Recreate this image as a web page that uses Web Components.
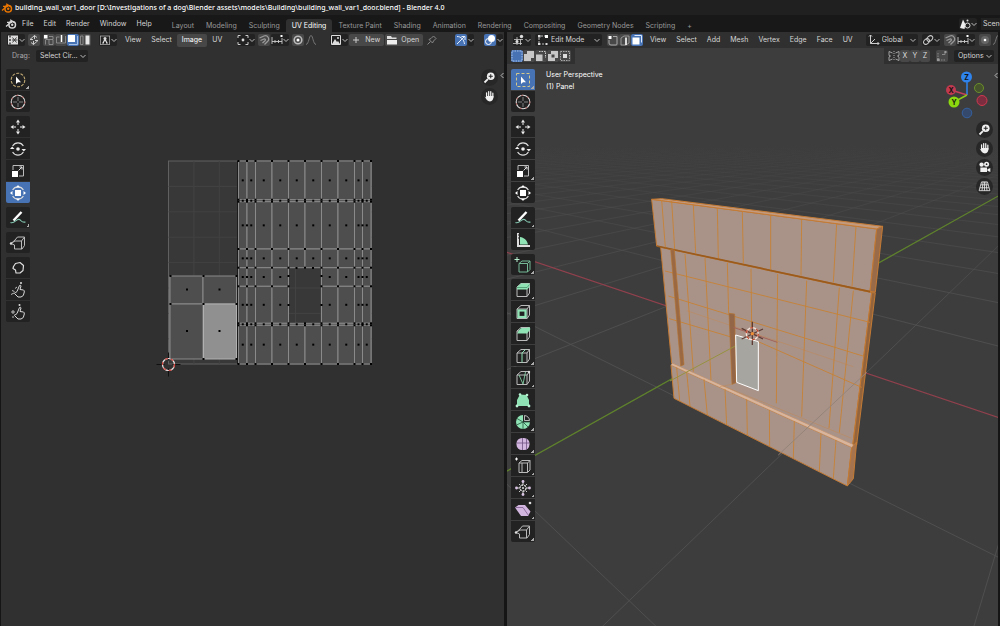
<!DOCTYPE html>
<html lang="en">
<head>
<meta charset="utf-8">
<title>Blender</title>
<style>
    html, body { margin: 0; height: 100%; }
    body {
        background: #181818;
        color: #d6d6d6;
        font: 7px/12px Inter, "Liberation Sans", sans-serif;
        overflow: hidden;
    }
</style>
</head>
<body>
<app-window></app-window>

<script>
// ---------- icons ----------

// header icons, 12x12
const SMALL = {
    logo: '<circle cx="7.2" cy="6.8" r="3.3" fill="none" stroke="currentColor" stroke-width="1.5"/><circle cx="7.2" cy="6.8" r="1.2" fill="currentColor"/><path d="M1 8.6 6.2 4M2 4.4h5M5.2 1.8 9 4.6" stroke="currentColor" stroke-width="1.3" fill="none"/>',
    uvEditor: '<path d="M1 1.500h10v9H1z" fill="#ddd"/><path d="M3 1.500v2M3 5v2M3 8.500v2" stroke="#222" stroke-width="1.300"/><path d="M5.500 3.500l4 5M9.500 3.500l-4 5M5 6h5.500" stroke="#333" stroke-width=".9"/>',
    sync: '<path d="M2 5.500 6.500 1.500v3.500M10 6.500 5.500 10.500V7M2 5.500h3M10 6.500H7M6.500 1.500 9 3.500M5.500 10.500 3 8.500" stroke="#ccc" fill="none"/>',
    selVert: '<rect x="1" y="1" width="3.500" height="3.500" fill="#fff"/><path d="M6 2.500h4v3H2.500M2.500 6v4.500M6 6v4.500h4V6" stroke="#999" fill="none" stroke-width=".8"/>',
    selEdge: '<path d="M1.500 3v6h5M10.500 2v7h-4M1.500 3h3" stroke="#999" fill="none" stroke-width=".8"/><path d="M6.500 1v7" stroke="#fff" stroke-width="1.500"/>',
    selFaceUv: '<rect x="1" y="1" width="7" height="7" fill="#fff"/><path d="M10.500 2v8.500H2" stroke="#bcd0ee" fill="none" stroke-width=".8"/>',
    selIsland: '<path d="M1.500 2v8.500H4V2z" stroke="#999" fill="none" stroke-width=".8"/><path d="M6.500 1.500h4v9h-4z" fill="#e8e8e8"/>',
    sticky: '<path d="M1 2h10M1 10.500h10M1.500 2v8.500M10.500 2v8.500" stroke="#bbb" stroke-width=".7"/><circle cx="6" cy="4.500" r="1.500" fill="#ddd"/><path d="M6 4 9 9.500H7V7.500H5v2H3z" fill="#ddd"/>',
    pivot: '<path d="M1 4V1.500h2.500M8.500 1.500H11V4M11 8v2.500H8.500M3.500 10.500H1V8" stroke="#ccc" fill="none"/><circle cx="6" cy="6" r="1.400" fill="#ddd"/>',
    magnet: '<path d="M1.500 4 6 2a3.300 3.300 0 0 1 3.500 5.500L6.500 10.500M2.500 6.500 6 5a1 1 0 0 1 1 1.700L4.500 9" stroke="#9a9a9a" fill="none" stroke-width="1.300"/>',
    snapTo: '<path d="M1 3v7M11 4v6M1 7.500h10M4 6v3M7.500 6v3" stroke="#ccc" fill="none" stroke-width=".9"/><rect x="9.500" y="1" width="2" height="2" fill="#fff"/>',
    prop: '<circle cx="6" cy="6" r="3.800" fill="none" stroke="#bbb" stroke-width="1.600"/><circle cx="6" cy="6" r="1.500" fill="#fff"/>',
    propOff: '<circle cx="6" cy="6" r="4" fill="#666"/><circle cx="6" cy="6" r="1.300" fill="#fff"/>',
    falloff: '<path d="M1 10.500C4 10 4 1.500 6 1.500s2 8.500 5 9" stroke="#777" fill="none"/>',
    image: '<path d="M1.500 1.500h9v9h-9z" fill="none" stroke="#ddd"/><path d="M2 10 5 5l2 3 1-1 2 3z" fill="#ddd"/><circle cx="8" cy="4" r="1" fill="#ddd"/>',
    plus: '<path d="M6 3v6M3 6h6" stroke="#ccc"/>',
    folder: '<path d="M1 2h4l1 1.500h4.500V5H1z" fill="#ddd"/><path d="M1 6h10v4.500H1z" fill="#eee"/>',
    pin: '<path d="M1.500 10.500 4.500 7.500M3 5.500 6.500 9l1-2L10 4.500 7.500 2 5 4.500z" fill="none" stroke="#888"/>',
    gizmo: '<path d="M2 2.500c4 0 7 3 7.500 7.500M2 10l7-7M6.500 2.500H10V6" fill="none" stroke="#e6eefb"/>',
    overlay: '<circle cx="7.500" cy="4.500" r="3.500" fill="#fff"/><circle cx="4.500" cy="7.500" r="3" fill="none" stroke="#fff"/>',
    viewEditor: '<circle cx="8.500" cy="2.500" r="1.700" fill="#ddd"/><path d="M1 5.500h9M0 9.500h9M4 3v8M7.500 5v6" stroke="#ccc" fill="none" stroke-width=".8"/><circle cx="4" cy="7.500" r="1.500" fill="#ddd"/>',
    editMode: '<path d="M2 4v6h6M4 2h4" stroke="#bbb" fill="none" stroke-dasharray="2 1"/><rect x="1" y="1" width="2.500" height="2.500" fill="#ddd"/><rect x="8" y="1" width="3" height="3" fill="#fff"/><rect x="1" y="9" width="2" height="2" fill="#ddd"/><rect x="8.500" y="9" width="2" height="2" fill="#ddd"/>',
    meshVert: '<path d="M2 6v3a2 2 0 0 0 2 2h5a1 1 0 0 0 1-1V2.500H6" stroke="#aaa" fill="none"/><rect x="1.500" y="2" width="3" height="3" fill="#fff"/>',
    meshEdge: '<path d="M2 4l3-2h5v7L7 11H2zM7 11V4" stroke="#aaa" fill="none" stroke-width=".8"/><path d="M7 3.500V11" stroke="#fff" stroke-width="1.500"/>',
    meshFace: '<path d="M3.500 1.500h7v7" stroke="#dce8fa" fill="none"/><rect x="1.500" y="3.500" width="7" height="7" fill="#fff"/>',
    axes: '<path d="M2.500 1v8.500H11M2.500 9.500 7 5M1 2.500 2.500 1 4 2.500M9.500 8 11 9.500 9.500 11" stroke="#ccc" fill="none"/>',
    link: '<ellipse cx="4.500" cy="7.500" rx="3.200" ry="2.300" transform="rotate(-40 4.500 7.500)" fill="none" stroke="#ccc"/><ellipse cx="7.800" cy="4.500" rx="3.200" ry="2.300" transform="rotate(-40 7.800 4.500)" fill="none" stroke="#ccc"/>',
    scene: '<path d="M1 10 4 1.500l2.500 5L5.500 11z" fill="#eee"/><circle cx="8.500" cy="7.500" r="2.500" fill="none" stroke="#ddd"/><circle cx="8.500" cy="2.500" r="1" fill="#ddd"/>',
    boxNew: '<rect x="1" y="1" width="10" height="10" fill="#4772b3" stroke="#a8c2ea" stroke-dasharray="1.500 1"/>',
    boxAdd: '<path d="M4 1h7v7H8v3H1V4h3z" fill="#c8c8c8"/>',
    boxSub: '<path d="M1 4.500h6.500V11H1z" fill="#c8c8c8"/><path d="M4 1.500h6.500V8" stroke="#ccc" fill="none" stroke-dasharray="1.500 1"/>',
    boxXor: '<path d="M4 1h7v7H8v3H1V4h3zM4.500 4.500v3h3v-3z" fill="#c8c8c8" fill-rule="evenodd"/>',
    boxAnd: '<rect x="1.500" y="1.500" width="9" height="9" fill="none" stroke="#aaa" stroke-dasharray="1.500 1"/><rect x="4" y="4" width="4" height="4" fill="#ddd"/>',
    mirror: '<path d="M6 1v10" stroke="#aaa" stroke-dasharray="1 1"/><path d="M4.500 3 1 1.500v4L2.500 6 1 7v3.500L4.500 9M7.500 3 11 1.500v4L9.500 6 11 7v3.500L7.500 9" fill="none" stroke="#bbb" stroke-width=".8"/>',
    automerge: '<path d="M2 3v7h7" stroke="#888" stroke-dasharray="1.500 1" fill="none"/><path d="M9 1.500v3H6" stroke="#888" fill="none"/><rect x="1" y="8.500" width="2.500" height="2.500" fill="#999"/><rect x="8.500" y="1" width="2" height="2" fill="#999"/>',
};

// wire cube shared by the mesh tools
const CUBE = '<path d="M3 6 7 2.500h8.500L13 6zM3 6v9.500h10V6M13 15.500 15.500 12V2.500" fill="none" stroke="#bbb"/>';
const ORBIT = '<path d="M3.600 6a6.200 6.200 0 0 1 10.800 0M14.400 12a6.200 6.200 0 0 1-10.800 0" fill="none" stroke="#ddd" stroke-width="1.100"/>';
// closed hand with the forefinger up
const HAND = '<path d="M8 10.500 10.500 4.500q1.200-.8 1.500.5L11 8.500l3.500.5q1 .5.800 2l-1 3.500L12 16H9L5.500 12.500q0-1.200 1.300-1z" fill="none" stroke="#d8d8d8" stroke-linejoin="round"/>';
const GREEN = '#8fe3b4';

// tool icons, 18x18
const LARGE = {
    tweak: '<circle cx="9" cy="9" r="6.800" fill="none" stroke="#c0a973" stroke-width="1.100" stroke-dasharray="3 1.300"/><path d="M7 5.500v7.500l2-1.800h3z" fill="#fff"/>',
    selectBox: '<rect x="2.500" y="2.500" width="13" height="13" fill="none" stroke="#d4c98a" stroke-dasharray="3 2"/><path d="M7 5.500v7.500l2-1.800h3z" fill="#fff"/>',
    cursor: '<circle cx="9" cy="9" r="6.800" fill="none" stroke="#dedede" stroke-width="1.100"/><circle cx="9" cy="9" r="6.800" fill="none" stroke="#a8615e" stroke-width="1.100" stroke-dasharray="2 4"/><path d="M9 4v4M9 10v4M4 9h4M10 9h4" stroke="#999" stroke-width=".8"/>',
    move: '<path d="M9 1.500 11 4.500H7zM9 16.500 7 13.500h4zM1.500 9l3-2v4zM16.500 9l-3 2V7z" fill="#eee"/><path d="M9 4.500V7M9 11v2.500M4.500 9H7M11 9h2.500" stroke="#eee"/>',
    rotate: ORBIT + '<circle cx="9" cy="9" r="1.800" fill="#eee"/><path d="M1 9h4.500L3.200 6.500zM12.500 9H17l-2.200 2.500z" fill="#eee"/>',
    scale: '<path d="M4 8V3.500h10.500V14H10" fill="none" stroke="#bbb"/><rect x="3" y="9" width="6" height="6" fill="#fff"/><path d="M9.500 8.500 13 5M10.500 5H13v2.500" fill="none" stroke="#ddd"/>',
    transform: ORBIT + '<rect x="6" y="6" width="6" height="6" fill="#fff"/><path d="M9 1 11 3.500H7zM9 17l-2-2.500h4zM1 9l2.500-2v4zM17 9l-2.500 2V7z" fill="#fff"/>',
    annotate: '<path d="M4.500 11.500 12.500 3" stroke="#fff" stroke-width="2.400"/><path d="M1.500 13.500c4 2 6-4.500 9-3 2 1 2 3.500 6 2.500" fill="none" stroke="#84c7b0" stroke-width="1.100"/>',
    rip: '<path d="M2 9.500 6 6 8.500 3h7v8.500L13 15H5.500V11L2 9.500 6 7h6.500l3-4M12.500 7v8" fill="none" stroke="#bbb"/><circle cx="2" cy="9.500" r="1.200" fill="#ddd"/>',
    grab: '<path d="M4.500 7.500 6.500 4.500l4.500-1 3.500 3-.5 5-3 2.500H7L6.500 11 4 9.500z" fill="none" stroke="#ddd" stroke-width="1.200" stroke-linejoin="round"/>',
    relax: HAND + '<path d="M2 13.500 5 12M3 9.500l2.500 1M8 6 6 7.500" stroke="#bbb"/><circle cx="12" cy="2" r="1" fill="#ddd"/>',
    pinch: HAND + '<path d="M2 9h4M4 7v4M3 14h2" stroke="#bbb"/><circle cx="10.500" cy="2" r="1" fill="#ddd"/>',
    measure: '<path d="M4 2v13h12" fill="none" stroke="#ddd" stroke-width="2"/><path d="M6 6c4 .5 7 3 8 7.500H6z" fill="' + GREEN + '"/><path d="M4 4h1.500M4 7h1.500" stroke="#222"/>',
    addCube: '<path d="M5 7.500 8 5h8l-2.500 2.500zM5 7.500V16h8.500V7.500M13.500 16 16 13.500V5" fill="none" stroke="#74b896"/><path d="M3 1v5M.5 3.500h5" stroke="#b8f0d2"/>',
    extrude: CUBE + '<path d="M3 6 7 2.500h8.500V6L13 8.500H3z" fill="' + GREEN + '"/><path d="M3 6.500h10l2.500-3" stroke="#347858" stroke-width=".6" fill="none"/>',
    inset: CUBE + '<rect x="4.500" y="7.500" width="7" height="6.500" fill="none" stroke="' + GREEN + '" stroke-width="2.200"/>',
    bevel: CUBE + '<path d="M3 8.500 5 5l2.500-2H14l1.500 2.500L13 8.500z" fill="' + GREEN + '"/><circle cx="14.500" cy="4" r="1.800" fill="' + GREEN + '"/>',
    loopCut: CUBE + '<path d="M8 15.500V6l3.500-3.500" fill="none" stroke="' + GREEN + '"/>',
    knife: CUBE + '<path d="M5 6l4 9 2.500-12" fill="none" stroke="' + GREEN + '" stroke-width=".8"/><circle cx="15" cy="3" r="1.200" fill="#ddd"/>',
    polyBuild: '<path d="M6 3.500 12.500 4 15 9v6H3V9z" fill="' + GREEN + '"/><g fill="#b8f0d2"><circle cx="6" cy="3.500" r="1.300"/><circle cx="13" cy="4" r="1.300"/><circle cx="3" cy="15" r="1.400"/><circle cx="15" cy="15" r="1.400"/></g>',
    spin: '<path d="M9 9V2a7 7 0 1 0 7 7z" fill="' + GREEN + '"/><path d="M9 9 3 5.500M9 9l-6.500 3M9 9v7M9 9l5 5M9 9h7" stroke="#25513c" stroke-width=".8"/><path d="M10.500 7.500V2.500c3 .3 5 2.500 5 5z" fill="none" stroke="#ddd" stroke-width=".8"/>',
    smooth: '<rect x="2.500" y="3" width="13" height="12" rx="5.500" fill="#d3b6e0"/><path d="M3 8h12M8.500 3v12M12.500 4v11" stroke="#6f5280" stroke-width=".8"/>',
    edgeSlide: '<path d="M5 6 8 3.500h8L13.500 6zM5 6v9.500h8.500V6M13.500 15.500 16 13V3.500M8 6v9.500" fill="none" stroke="#bbb"/><path d="M1 2h3M2.500.5v3" stroke="#fff"/>',
    shrink: '<path d="M9 3v3M9 12v3M3 9h3M12 9h3M5 5l1.500 1.500M13 5l-1.500 1.500M5 13l1.500-1.500M13 13l-1.500-1.500" stroke="#ccc"/><circle cx="9" cy="9" r="3" fill="none" stroke="#ddd" stroke-width="1.300" stroke-dasharray="2 1"/><circle cx="9" cy="9" r="1" fill="#ddd"/><g fill="#d9c4e4"><circle cx="9" cy="2.500" r="1.400"/><circle cx="9" cy="15.500" r="1.400"/><circle cx="2.500" cy="9" r="1.400"/><circle cx="15.500" cy="9" r="1.400"/></g>',
    shear: '<path d="M1 6.500 4.500 4H11l5.500 6.500-2.500 4.500H7z" fill="#d3b6e0"/><path d="M1.500 6.500H9l5.500 8" stroke="#7a5a8c" fill="none" stroke-width=".8"/><circle cx="16" cy="2" r="1.300" fill="#ddd"/>',
    zoom: '<circle cx="10.500" cy="7.500" r="4.600" fill="#f0f0f0"/><path d="M10.500 5v5M8 7.500h5" stroke="#222" stroke-width="1.200"/><path d="M7 11 3 15" stroke="#f0f0f0" stroke-width="2.200"/>',
    hand: '<path d="M5.500 10.500V4.500M8 9V3M10.500 9V3.200M13 10V5" stroke="#f0f0f0" stroke-width="1.500" stroke-linecap="round"/><path d="M3 9 6 11V8.500h7.800c0 4-1.300 6.500-4.300 6.500C6.500 15 5 12 3 9z" fill="#f0f0f0"/>',
    camera: '<circle cx="5.500" cy="5.500" r="2.600" fill="#f0f0f0"/><circle cx="11.500" cy="5" r="3" fill="#f0f0f0"/><path d="M4 9h8v5.500H4zM12.500 11 16 9.500v5L12.500 13z" fill="#f0f0f0"/><circle cx="11.500" cy="5" r="1" fill="#222"/>',
    grid: '<path d="M5.500 3.500h7l3 10.500h-13zM4.500 7h9M3.500 10.500h11M9 3.500V14M7.300 3.500 6 14M10.700 3.500 12 14" fill="none" stroke="#e8e8e8"/>',
};

function icon(name, size = 12) {
    const set = size === 12 ? SMALL : LARGE;
    return `<svg width="${size}" height="${size}" viewBox="0 0 ${size} ${size}" aria-hidden="true">${set[name] || ''}</svg>`;
}

const CHEVRON = '<svg class="chev" width="6" height="12" viewBox="0 0 6 12" aria-hidden="true"><path d="M.5 5 3 7.500 5.500 5" fill="none" stroke="#bbb"/></svg>';

// ---------- controls ----------

class UiButton extends HTMLElement {
    constructor() {
        super();
        this.attachShadow({ mode: 'open' });
    }

    connectedCallback() {
        const name = this.getAttribute('icon');
        this.shadowRoot.innerHTML = `
            <style>
                :host { display: block; flex: none; }
                button {
                    display: flex; align-items: center; gap: 2px;
                    height: 12px; padding: 0; margin: 0; border: 0;
                    border-radius: 2px; background: none;
                    color: inherit; font: inherit; white-space: nowrap;
                }
                svg { display: block; flex: none; }
                :host([kind="raised"]) button { background: #484848; }
                :host([kind="drop"]) button { background: #222; gap: 0; }
                :host([kind="active"]) button { background: #4772b3; }
                :host([kind="flat"]) button { gap: 0; }
                :host([wide]) button { padding: 0 4px 0 1px; gap: 3px; }
                :host([letter]) button { width: 10px; justify-content: center; color: #ddd; }
            </style>
            <button type="button" aria-label="${this.getAttribute('label') || name}">
                ${name ? icon(name) : ''}<slot></slot>${this.hasAttribute('chevron') ? CHEVRON : ''}
            </button>
        `;
        // a caption that is drawn is its own label
        if (this.textContent.trim()) this.shadowRoot.querySelector('button').removeAttribute('aria-label');
    }
}

class UiSelect extends HTMLElement {
    constructor() {
        super();
        this.attachShadow({ mode: 'open' });
    }

    connectedCallback() {
        const name = this.getAttribute('icon');
        this.shadowRoot.innerHTML = `
            <style>
                :host { display: block; flex: none; }
                label {
                    display: flex; align-items: center;
                    height: 12px; padding: 0 2px;
                    border-radius: 2px; background: #222;
                }
                svg { flex: none; }
                select {
                    appearance: none; border: 0; margin: 0; padding: 0 2px;
                    background: none; color: inherit; font: inherit; flex: 1;
                    width: var(--field, auto);
                }
            </style>
            <label>${name ? icon(name) : ''}
                <select aria-label="${this.getAttribute('label')}"><option>${this.getAttribute('value')}</option></select>
                ${CHEVRON}
            </label>
        `;
    }
}

class MenuList extends HTMLElement {
    constructor() {
        super();
        this.attachShadow({ mode: 'open' });
    }

    connectedCallback() {
        const current = this.getAttribute('current');
        const items = this.getAttribute('items').split(',');
        this.shadowRoot.innerHTML = `
            <style>
                :host { display: block; flex: none; }
                nav { display: flex; }
                button {
                    height: 13px; padding: 0 5px; margin: 0; border: 0;
                    border-radius: 2px; background: none;
                    color: inherit; font: inherit; white-space: nowrap;
                }
                .on { background: #474747; color: #fff; }
                :host([tabs]) button { padding: 0 6px; color: #999; border-radius: 3px 3px 0 0; }
                :host([tabs]) .on { background: #303030; color: #fff; }
            </style>
            <nav>${items.map(t => `<button type="button" class="${t === current ? 'on' : ''}">${t}</button>`).join('')}</nav>
        `;
    }
}

class ToolShelf extends HTMLElement {
    constructor() {
        super();
        this.attachShadow({ mode: 'open' });
    }

    connectedCallback() {
        // groups are split by "|", "+" marks a tool that has more under it
        const active = this.getAttribute('active');
        const groups = this.getAttribute('tools').split('|').map(g => g.trim().split(' '));
        const tool = (raw) => {
            const name = raw.replace('+', '');
            return `<button type="button" aria-label="${name}" class="${name === active ? 'on' : ''} ${raw.endsWith('+') ? 'more' : ''}">${icon(name, 18)}</button>`;
        };
        this.shadowRoot.innerHTML = `
            <style>
                :host { display: flex; flex-direction: column; gap: 4px; width: 24px; }
                div { display: grid; gap: 1px; border-radius: 2px; overflow: hidden; }
                button {
                    height: 21px; padding: 0; margin: 0; border: 0;
                    display: grid; place-items: center;
                    background: #222;
                }
                .on { background: #4772b3; }
                .more {
                    background-image: linear-gradient(135deg, transparent 50%, #aaa 50%);
                    background-size: 3px 3px;
                    background-position: right 1px bottom 1px;
                    background-repeat: no-repeat;
                }
            </style>
            ${groups.map(g => `<div>${g.map(tool).join('')}</div>`).join('')}
        `;
    }
}

class NavButtons extends HTMLElement {
    constructor() {
        super();
        this.attachShadow({ mode: 'open' });
    }

    connectedCallback() {
        this.shadowRoot.innerHTML = `
            <style>
                :host { display: grid; gap: 2px; }
                button {
                    width: 17px; height: 17px; padding: 0; border: 0; border-radius: 50%;
                    display: grid; place-items: center; background: #272727;
                }
                svg { width: 15px; height: 15px; }
            </style>
            ${this.getAttribute('items').split(' ').map(n => `<button type="button" aria-label="${n}">${icon(n, 18)}</button>`).join('')}
        `;
    }
}

class AxisGizmo extends HTMLElement {
    constructor() {
        super();
        this.attachShadow({ mode: 'open' });
    }

    connectedCallback() {
        this.shadowRoot.innerHTML = `
            <style>
                :host { display: block; }
                svg { display: block; }
                text { font: 700 7px Inter, "Liberation Sans", sans-serif; text-anchor: middle; fill: #111; }
            </style>
            <svg width="44" height="50" viewBox="945 69 44 50">
                <g stroke-width="1.500">
                    <path d="M967 95V77" stroke="#2f83ec"/>
                    <path d="M967 95 951 90" stroke="#c5405a"/>
                    <path d="M967 95 954 102" stroke="#8cc81c"/>
                </g>
                <circle cx="979" cy="88" r="4.500" fill="#46532c" stroke="#6b8f2a"/>
                <circle cx="982" cy="100.500" r="5" fill="#7c2e40" stroke="#d0384f"/>
                <circle cx="967" cy="113" r="4.800" fill="#34496b" stroke="#34609f"/>
                <circle cx="966.500" cy="77" r="5.500" fill="#2f83ec"/>
                <circle cx="951" cy="90" r="5" fill="#c0394f"/>
                <circle cx="954" cy="102" r="5.500" fill="#8cd80f"/>
                <text x="966.500" y="79.500">Z</text>
                <text x="951" y="92.500">X</text>
                <text x="954" y="104.500">Y</text>
            </svg>
        `;
    }
}

// ---------- canvases ----------

function cursorMark(x, y, r) {
    return `<g fill="none">
        <path d="M${x - 12} ${y}h8M${x + 4} ${y}h8M${x} ${y - 12}v8M${x} ${y + 4}v8" stroke="#111"/>
        <circle cx="${x}" cy="${y}" r="${r}" stroke="#eee" stroke-width="1.200"/>
        <circle cx="${x}" cy="${y}" r="${r}" stroke="#d0413c" stroke-width="1.200" stroke-dasharray="3 3"/>
    </g>`;
}

class UvCanvas extends HTMLElement {
    constructor() {
        super();
        this.attachShadow({ mode: 'open' });
    }

    connectedCallback() {
        this.shadowRoot.innerHTML = `
            <style>
                :host { display: block; overflow: hidden; }
                svg { display: block; width: 100%; height: 100%; }
            </style>
            <svg viewBox="1 32 503 594" preserveAspectRatio="xMinYMin slice">${this.draw()}</svg>
        `;
    }

    draw() {
        const xs = [238.5, 247, 255.5, 272, 288.5, 305, 321.5, 338, 354.5, 362.5, 371];
        const ys = [161, 199.7, 201.7, 249, 267.7, 286.3, 323.3, 325.3, 364];
        const isHole = (c, r) => c >= 4 && c <= 5 && r >= 4 && r <= 5;
        let faces = '', edges = '', dots = '';
        const dot = (x, y) => { dots += `<rect x="${x - 1}" y="${y - 1}" width="2" height="2"/>`; };

        for (let c = 0; c < xs.length - 1; c++) {
            for (let r = 0; r < ys.length - 1; r++) {
                if (isHole(c, r)) continue;
                const w = xs[c + 1] - xs[c], h = ys[r + 1] - ys[r];
                faces += `<rect x="${xs[c]}" y="${ys[r]}" width="${w}" height="${h}"/>`;
                dot(xs[c] + w / 2, ys[r] + h / 2);
                // narrow strips also show the middle of the shared edge
                if ((c === 0 || c === 8) && r > 0 && r < 7) dot(xs[c + 1], ys[r] + h / 2);
            }
        }
        for (const x of xs) {
            for (const y of ys) if (!(x === 305 && y > 270 && y < 300)) dot(x, y);
        }
        for (const y of [276, 305]) { dot(288.5, y); dot(321.5, y); }
        for (const x of [296.5, 313]) dot(x, 268);

        const own = [[170, 276, 33, 28], [203, 276, 33.5, 28], [170, 304, 33, 55]];
        for (const [x, y, w, h] of own) faces += `<rect x="${x}" y="${y}" width="${w}" height="${h}"/>`;
        for (const y of [276, 304, 359]) for (const x of [170.5, 203.5, 236.5]) dot(x, y);
        for (const y of [289.5, 331]) for (const x of [187, 219.5]) dot(x, y);

        for (let k = 1; k < 8; k++) {
            const d = k * 25.4;
            edges += `<path d="M${168.5 + d} 161v203M168.500 ${161 + d}h203"/>`;
        }
        return `
            <rect x="168.500" y="161" width="203" height="203" fill="#383838" stroke="#606060"/>
            <g stroke="#424242">${edges}</g>
            <g fill="#4e4e4e" stroke="#8a8a8a">${faces}</g>
            <rect x="203.500" y="304" width="33" height="55" fill="#909090" stroke="#b0b0b0"/>
            <path d="M169.500 276v83" stroke="#777"/>
            <path d="M237.500 161v203" stroke="#1c1c1c"/>
            <g fill="#000">${dots}</g>
            ${cursorMark(168.5, 364.5, 6)}
        `;
    }
}

class ViewScene extends HTMLElement {
    constructor() {
        super();
        this.attachShadow({ mode: 'open' });
    }

    connectedCallback() {
        this.shadowRoot.innerHTML = `
            <style>
                :host { display: block; overflow: hidden; }
                svg { display: block; width: 100%; height: 100%; }
            </style>
            <svg viewBox="507 32 491 594" preserveAspectRatio="xMidYMin slice">
                <defs>
                    <linearGradient id="fade" gradientUnits="userSpaceOnUse" x1="0" y1="125" x2="0" y2="330">
                        <stop offset="0.100" stop-color="#505050" stop-opacity="0"/>
                        <stop offset="0.400" stop-color="#505050" stop-opacity=".4"/>
                        <stop offset="1" stop-color="#505050" stop-opacity=".9"/>
                    </linearGradient>
                </defs>
                <rect x="507" y="32" width="491" height="594" fill="#3d3d3d"/>
                <path d="${this.floor()}" fill="none" stroke="url(#fade)"/>
                <path d="M500 250 1000 418" stroke="#91404d" stroke-width="1.200"/>
                <path d="M500 475 1000 195" stroke="#5f822c" stroke-width="1.300"/>
                ${this.wall()}
            </svg>
        `;
    }

    // floor grid: world steps projected toward two vanishing points
    floor() {
        const o = [751.2, 334.3], v1 = [130, 125], v2 = [1124, 125];
        const a = 0.156, b = 0.202;
        const point = (i, j) => {
            const w = 1 + i * a + j * b;
            const at = k => ((o[k] + i * a * v1[k] + j * b * v2[k]) / w).toFixed(1);
            return at(0) + ' ' + at(1);
        };
        let d = '';
        for (let n = -40; n <= 40; n++) {
            if (n === 0) continue;
            const i0 = Math.max(-40, (0.08 - 1 - n * b) / a);
            const j0 = Math.max(-40, (0.08 - 1 - n * a) / b);
            if (i0 < 40) d += `M${point(i0, n)}L${point(40, n)}`;
            if (j0 < 40) d += `M${point(n, j0)}L${point(n, 40)}`;
        }
        return d;
    }

    // the wall is modelled on a 750x900 sheet, a third of it on screen
    wall() {
        const seg = list => list.map(([x1, y1, x2, y2]) => `M${x1} ${y1}L${x2} ${y2}`).join('');
        const top = seg([
            [65, 30, 76, 172], [95, 33, 104, 178], [160, 44, 167, 190], [232, 54, 235, 205], [307, 65, 310, 221],
            [392, 76, 392, 238], [485, 88, 483, 257], [590, 101, 580, 278], [648, 108, 636, 290],
        ]);
        const middle = seg([
            [135, 192, 160, 545], [195, 204, 213, 570], [262, 218, 266, 370], [333, 236, 335, 410], [413, 252, 409, 640],
            [500, 272, 485, 680], [598, 293, 567, 715], [640, 302, 598, 728],
            [75, 243, 690, 397], [85, 318, 672, 499], [88, 386, 270, 440], [355, 455, 665, 592],
        ]);
        const faint = seg([[140, 362, 640, 530], [250, 588, 635, 745], [276, 583, 240, 590]]);
        const bottom = seg([
            [110, 532, 119, 632], [140, 546, 150, 648], [192, 568, 202, 675], [255, 597, 260, 705], [320, 628, 322, 735],
            [388, 660, 389, 768], [463, 694, 460, 804], [543, 731, 538, 844], [588, 750, 580, 865],
        ]);
        return `
            <g transform="translate(640 190) scale(.333333)" stroke-linejoin="round">
                <g fill="#a99389" stroke="#c47a34" stroke-width="3">
                    <path d="M62 172 695 308 638 765 95 520z"/>
                    <path d="M695 308 706 308 650 765 638 768z" fill="#94653d"/>
                    <path d="M35 28 710 117 690 304 50 168z"/>
                    <path d="M35 28 65 26 728 109 710 117z" fill="#c49a7d"/>
                    <path d="M710 117 728 109 706 306 690 304z" fill="#9a6b48"/>
                    <path d="M93 525 635 772 622 888 102 625z"/>
                    <path d="M635 772 650 756 640 866 622 888z" fill="#a5744e"/>
                    <path d="M93 525 97 520 640 764 635 772z" fill="#d8b59c" stroke="#cc9f7e" stroke-width="1"/>
                </g>
                <path d="M50 168 690 305" stroke="#9a5b1c" stroke-width="5"/>
                <path d="${top}${middle}${bottom}" fill="none" stroke="#c9812f" stroke-opacity=".85" stroke-width="3"/>
                <path d="${faint}" fill="none" stroke="#c9813c" stroke-opacity=".55" stroke-width="2"/>
                <path d="M92 178 103 180 132 524 122 528z" fill="#9a6843" stroke="#b5722f" stroke-width="2"/>
                <path d="M267 370 284 372 288 578 276 583z" fill="#946648" stroke="#b5722f" stroke-width="2"/>
                <path d="M90 573 310 455" stroke="#97923f" stroke-width="3"/>
                <path d="M280 412 412 457" stroke="#a2625a" stroke-width="3"/>
                <path d="M415 795 680 547" stroke="#958479" stroke-width="3"/>
                <path d="M287 435 355 455 355 602 290 577z" fill="#a6a59f" stroke="#fff" stroke-width="3"/>
                <g fill="none">
                    <path d="M337 395v70M305 415l64 32M305 447l64-30" stroke="#5d3b33" stroke-width="4"/>
                    <circle cx="337" cy="431" r="18" stroke="#f3e4dc" stroke-width="4"/>
                    <circle cx="337" cy="431" r="18" stroke="#c04a30" stroke-width="4" stroke-dasharray="9 10"/>
                    <circle cx="337" cy="431" r="5" fill="#f0913a"/>
                </g>
            </g>
        `;
    }
}

// ---------- editors ----------

const EDITOR_CSS = `
    :host { display: grid; grid-template: auto 1fr / 1fr; min-width: 0; overflow: hidden; }
    .canvas, .ui { grid-area: 1 / 1 / 3 / 2; min-width: 0; min-height: 0; }
    .ui { display: flex; flex-direction: column; }
    .bar { display: flex; align-items: center; height: 16px; background: #303030; overflow: hidden; }
    .run { display: flex; gap: 1px; }
    .tight { gap: 0; }
    .space { flex: 1; }
    .body { display: flex; justify-content: space-between; align-items: flex-start; flex: 1; }
    .fold { border: 0; padding: 0; background: none; color: #bbb; line-height: 0; }
`;

const FOLD = '<button type="button" class="fold" aria-label="sidebar"><svg width="4" height="7" viewBox="0 0 4 7"><path d="M3.500 1 1 3.500 3.500 6" fill="none" stroke="currentColor"/></svg></button>';

class UvEditor extends HTMLElement {
    constructor() {
        super();
        this.attachShadow({ mode: 'open' });
    }

    connectedCallback() {
        this.shadowRoot.innerHTML = `
            <style>
                ${EDITOR_CSS}
                :host { background: #303030; }
                .bar { padding: 0 1px 0 6px; }
                .head { gap: 3px; }
                .head .tight { margin-right: 5px; }
                .wider { flex: 2; }
                .widest { flex: 3; }
                .tool { padding-left: 11px; gap: 6px; color: #aaa; }
                .tool ui-select { color: #d6d6d6; }
                .body { padding: 5px 0 0 5px; }
                .side { display: flex; align-items: flex-start; gap: 2px; }
                .side .fold { margin-top: 3px; }
            </style>
            <uv-canvas class="canvas"></uv-canvas>
            <div class="ui">
                <div class="bar head">
                    <ui-button kind="drop" icon="uvEditor" chevron></ui-button>
                    <ui-button kind="raised" icon="sync"></ui-button>
                    <div class="run tight">
                        <ui-button kind="raised" icon="selVert"></ui-button>
                        <ui-button kind="raised" icon="selEdge"></ui-button>
                        <ui-button kind="active" icon="selFaceUv"></ui-button>
                        <ui-button kind="raised" icon="selIsland"></ui-button>
                    </div>
                    <ui-button kind="drop" icon="sticky" chevron></ui-button>
                    <menu-list items="View,Select,Image,UV" current="Image"></menu-list>
                    <span class="space"></span>
                    <ui-button kind="drop" icon="pivot" chevron></ui-button>
                    <div class="run">
                        <ui-button kind="raised" icon="magnet"></ui-button>
                        <ui-button kind="drop" icon="snapTo" chevron></ui-button>
                    </div>
                    <div class="run">
                        <ui-button kind="raised" icon="prop"></ui-button>
                        <ui-button kind="flat" icon="falloff"></ui-button>
                    </div>
                    <span class="space wider"></span>
                    <div class="run">
                        <ui-button kind="drop" icon="image" chevron></ui-button>
                        <ui-button kind="raised" icon="plus" wide>New</ui-button>
                        <ui-button kind="raised" icon="folder" wide>Open</ui-button>
                    </div>
                    <ui-button kind="flat" icon="pin"></ui-button>
                    <span class="space widest"></span>
                    <div class="run">
                        <ui-button kind="active" icon="gizmo"></ui-button>
                        <ui-button kind="drop" label="gizmos" chevron></ui-button>
                    </div>
                    <span class="space"></span>
                    <div class="run">
                        <ui-button kind="active" icon="overlay"></ui-button>
                        <ui-button kind="drop" label="overlays" chevron></ui-button>
                    </div>
                </div>
                <div class="bar tool">
                    <span>Drag:</span>
                    <ui-select label="Drag" value="Select Cir..."></ui-select>
                </div>
                <div class="body">
                    <tool-shelf active="transform" tools="tweak+ cursor | move rotate scale transform | annotate+ | rip | grab relax pinch"></tool-shelf>
                    <div class="side">
                        <nav-buttons items="zoom hand"></nav-buttons>
                        ${FOLD}
                    </div>
                </div>
            </div>
        `;
    }
}

class ViewportEditor extends HTMLElement {
    constructor() {
        super();
        this.attachShadow({ mode: 'open' });
    }

    connectedCallback() {
        this.shadowRoot.innerHTML = `
            <style>
                ${EDITOR_CSS}
                :host { background: #3d3d3d; }
                .head { gap: 4px; padding-left: 6px; }
                .head .tight { margin-left: 1px; }
                .head .cut { margin-right: -3px; }
                .head menu-list { margin-left: -2px; }
                .tool { background: none; justify-content: space-between; }
                .tool div { display: flex; align-items: center; height: 16px; background: #303030; padding: 0 4px; gap: 6px; }
                .tool .run { padding: 0; gap: 0; }
                .tool .modes { gap: 0; }
                .body { padding: 5px 0 0 4px; }
                .info { margin: 0 auto 0 11px; color: #fff; }
                .info p { margin: 0; }
                .side {
                    display: grid; grid-template-columns: auto 4px;
                    justify-items: end; align-items: start; row-gap: 2px;
                }
                .side axis-gizmo { margin-right: 5px; }
                .side nav-buttons { margin-right: 1px; }
                .side .fold { margin-top: 3px; }
            </style>
            <view-scene class="canvas"></view-scene>
            <div class="ui">
                <div class="bar head">
                    <ui-button kind="drop" icon="viewEditor" chevron></ui-button>
                    <ui-select icon="editMode" label="Mode" value="Edit Mode" style="--field: 45px"></ui-select>
                    <div class="run tight">
                        <ui-button kind="raised" icon="meshVert"></ui-button>
                        <ui-button kind="raised" icon="meshEdge"></ui-button>
                        <ui-button kind="active" icon="meshFace"></ui-button>
                    </div>
                    <menu-list items="View,Select,Add,Mesh,Vertex,Edge,Face,UV"></menu-list>
                    <span class="space"></span>
                    <ui-select icon="axes" label="Orientation" value="Global" style="--field: 30px"></ui-select>
                    <ui-button kind="drop" icon="link" chevron></ui-button>
                    <div class="run">
                        <ui-button kind="raised" icon="magnet"></ui-button>
                        <ui-button kind="drop" icon="snapTo" chevron></ui-button>
                    </div>
                    <div class="run cut">
                        <ui-button kind="raised" icon="propOff"></ui-button>
                        <ui-button kind="flat" icon="falloff"></ui-button>
                    </div>
                </div>
                <div class="bar tool">
                    <div class="modes">
                        <ui-button kind="active" icon="boxNew"></ui-button>
                        <ui-button kind="raised" icon="boxAdd"></ui-button>
                        <ui-button kind="raised" icon="boxSub"></ui-button>
                        <ui-button kind="raised" icon="boxXor"></ui-button>
                        <ui-button kind="raised" icon="boxAnd"></ui-button>
                    </div>
                    <div>
                        <div class="run">
                            <ui-button kind="flat" icon="mirror"></ui-button>
                            <ui-button kind="raised" letter>X</ui-button>
                            <ui-button kind="raised" letter>Y</ui-button>
                            <ui-button kind="raised" letter>Z</ui-button>
                        </div>
                        <ui-button kind="raised" icon="automerge"></ui-button>
                        <ui-select label="Options" value="Options"></ui-select>
                    </div>
                </div>
                <div class="body">
                    <tool-shelf active="selectBox" tools="selectBox+ cursor | move rotate scale+ transform | annotate+ measure | addCube+ | extrude+ inset bevel loopCut+ knife+ polyBuild spin+ smooth+ edgeSlide+ shrink+ shear+ rip+"></tool-shelf>
                    <div class="info">
                        <p>User Perspective</p>
                        <p>(1) Panel</p>
                    </div>
                    <div class="side">
                        <axis-gizmo></axis-gizmo>
                        ${FOLD}
                        <nav-buttons items="zoom hand camera grid"></nav-buttons>
                    </div>
                </div>
            </div>
        `;
    }
}

// ---------- window ----------

class AppWindow extends HTMLElement {
    constructor() {
        super();
        this.attachShadow({ mode: 'open' });
    }

    connectedCallback() {
        this.shadowRoot.innerHTML = `
            <style>
                :host { display: flex; flex-direction: column; height: 100vh; }
                .title {
                    display: flex; align-items: center; gap: 2px;
                    height: 15px; padding-left: 1px; background: #202020; color: #fff;
                    font-family: "Noto Sans", "Open Sans", sans-serif; font-weight: 500;
                    white-space: nowrap;
                }
                .title svg { color: #ea7600; }
                .top { display: flex; height: 17px; align-items: center; padding-left: 5px; overflow: hidden; }
                .top svg { flex: none; }
                .top .tabs { align-self: flex-end; margin-left: 9px; }
                .top .space { flex: 1; }
                .scene { display: flex; gap: 4px; width: 41px; flex: none; overflow: hidden; }
                .scene input {
                    width: 60px; height: 12px; box-sizing: border-box; padding: 0 2px;
                    border: 0; background: #222; color: inherit; font: inherit;
                }
                main {
                    flex: 1; min-height: 0;
                    display: grid; grid-template-columns: 503fr 491fr; gap: 3px;
                    padding: 0 2px 0 1px; background: #151515;
                }
            </style>
            <div class="title">${icon('logo')}<span>building_wall_var1_door [D:\\Investigations of a dog\\Blender assets\\models\\Building\\building_wall_var1_door.blend] - Blender 4.0</span></div>
            <div class="top">
                ${icon('logo')}
                <menu-list items="File,Edit,Render,Window,Help"></menu-list>
                <menu-list class="tabs" tabs current="UV Editing" items="Layout,Modeling,Sculpting,UV Editing,Texture Paint,Shading,Animation,Rendering,Compositing,Geometry Nodes,Scripting,+"></menu-list>
                <span class="space"></span>
                <div class="scene">
                    <ui-button kind="drop" icon="scene" chevron></ui-button>
                    <input aria-label="Scene" value="Scene">
                </div>
            </div>
            <main>
                <uv-editor></uv-editor>
                <viewport-editor></viewport-editor>
            </main>
        `;
    }
}

customElements.define('ui-button', UiButton);
customElements.define('ui-select', UiSelect);
customElements.define('menu-list', MenuList);
customElements.define('tool-shelf', ToolShelf);
customElements.define('nav-buttons', NavButtons);
customElements.define('axis-gizmo', AxisGizmo);
customElements.define('uv-canvas', UvCanvas);
customElements.define('view-scene', ViewScene);
customElements.define('uv-editor', UvEditor);
customElements.define('viewport-editor', ViewportEditor);
customElements.define('app-window', AppWindow);
</script>
</body>
</html>
